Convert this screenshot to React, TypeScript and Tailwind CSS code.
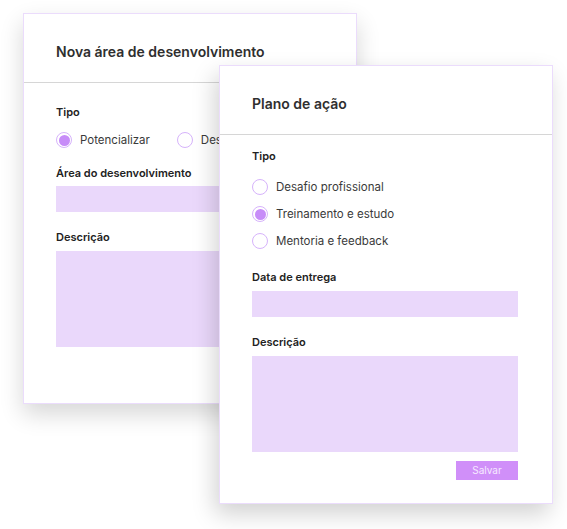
import React from 'react';

type Option = { label: string; checked?: boolean };

function Radio({ label, checked }: Option) {
  return (
    <label className="flex items-center gap-[8px] text-[11.5px] leading-[16px] text-[#3a3a3a]">
      <span className="flex h-[16px] w-[16px] shrink-0 items-center justify-center rounded-full border border-[#d6b3fb] bg-white">
        {checked && <span className="h-[11px] w-[11px] rounded-full bg-[#c78cf8]" />}
      </span>
      <span className="whitespace-nowrap">{label}</span>
    </label>
  );
}

function Label({ children, className }: { children: React.ReactNode; className?: string }) {
  return <p className={`text-[11px] font-semibold leading-[14px] text-[#222] ${className ?? ''}`}>{children}</p>;
}

function CardHeader({ title }: { title: string }) {
  return (
    <div className="flex h-[69px] items-center border-b border-[#d6d6d6] px-[32px] pt-[6px]">
      <h2 className="text-[14px] font-semibold text-[#2f2f2f]">{title}</h2>
    </div>
  );
}

export default function App() {
  return (
    <div className="relative h-[529px] w-[567px] overflow-hidden bg-white" style={{ fontFamily: 'Inter, "Noto Sans", sans-serif' }}>
      {/* back card */}
      <div className="absolute left-[23px] top-[13px] h-[391px] w-[334px] border border-[#ebdcfc] bg-white shadow-[0_10px_22px_rgba(0,0,0,0.16)]">
        <CardHeader title="Nova área de desenvolvimento" />
        <div className="px-[32px] pt-[22px]">
          <Label>Tipo</Label>
          <div className="mt-[13px] flex items-center gap-[27px]">
            <Radio label="Potencializar" checked />
            <Radio label="Desenvolver" />
          </div>
          <Label className="mt-[18px]">Área do desenvolvimento</Label>
          <div className="mt-[6px] h-[26px] w-[266px] bg-[#ead8fb]" />
          <Label className="mt-[18px]">Descrição</Label>
          <div className="mt-[7px] h-[96px] w-[266px] bg-[#ead8fb]" />
        </div>
      </div>

      {/* front card */}
      <div className="absolute left-[219px] top-[65px] flex h-[439px] w-[334px] flex-col border border-[#ebdcfc] bg-white shadow-[-4px_10px_22px_rgba(0,0,0,0.18)]">
        <CardHeader title="Plano de ação" />
        <div className="flex flex-col px-[32px] pt-[14px]">
          <Label>Tipo</Label>
          <div className="mt-[16px] flex flex-col gap-[11px]">
            <Radio label="Desafio profissional" />
            <Radio label="Treinamento e estudo" checked />
            <Radio label="Mentoria e feedback" />
          </div>
          <Label className="mt-[21px]">Data de entrega</Label>
          <div className="mt-[7px] h-[26px] w-[266px] bg-[#ead8fb]" />
          <Label className="mt-[18px]">Descrição</Label>
          <div className="mt-[7px] h-[96px] w-[266px] bg-[#ead8fb]" />
          <div className="mt-[9px] flex w-[266px] justify-end">
            <button className="h-[19px] w-[62px] bg-[#d08ff9] text-[10px] text-[#f6e9ff]">Salvar</button>
          </div>
        </div>
      </div>
    </div>
  );
}
